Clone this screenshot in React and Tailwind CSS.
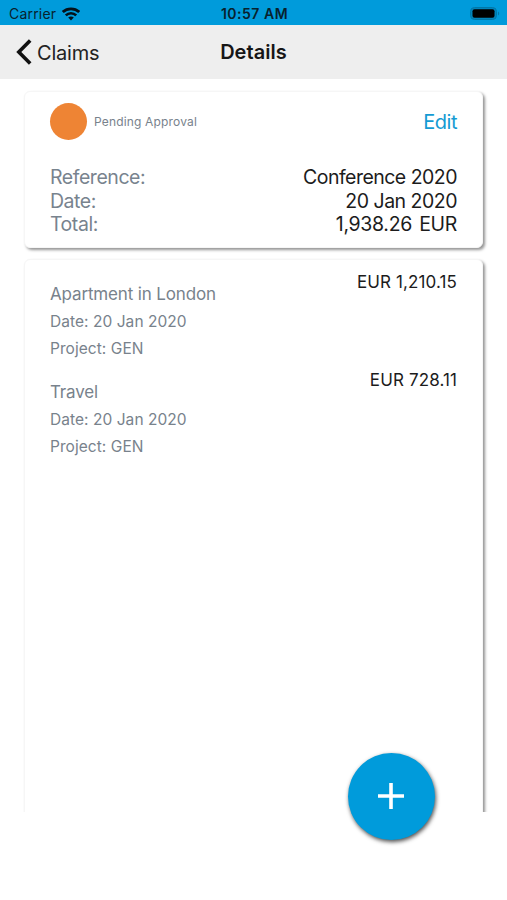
const claim = {
  status: 'Pending Approval',
  rows: [
    { label: 'Reference:', value: 'Conference 2020', tracking: 'tracking-[-0.52px]' },
    { label: 'Date:', value: '20 Jan 2020', tracking: 'tracking-[-0.5px]' },
    { label: 'Total:', value: '1,938.26 EUR', tracking: 'tracking-[-0.32px] [word-spacing:2px]' },
  ],
  items: [
    { name: 'Apartment in London', date: '20 Jan 2020', project: 'GEN', amount: 'EUR 1,210.15' },
    { name: 'Travel', date: '20 Jan 2020', project: 'GEN', amount: 'EUR 728.11' },
  ],
};

function StatusBar() {
  return (
    <div className="grid h-[25px] grid-cols-3 items-center bg-[#009bdb] pt-[2px] pr-[7px] pl-[9px] text-[#08222e]">
      <div className="flex items-center gap-[6px]">
        <span className="text-[14px] leading-none tracking-[0.2px]">Carrier</span>
        <svg width="18" height="14" viewBox="0 0 18 14" fill="none" stroke="#04121a">
          <path d="M0.8 5C5.2 0.8 12.8 0.8 17.2 5" strokeWidth="2.8" />
          <path d="M3.8 8.4C6.6 5.5 11.4 5.5 14.2 8.4" strokeWidth="2.6" />
          <path d="M9 13.4L6.2 10.6C7.8 9.2 10.2 9.2 11.8 10.6Z" fill="#04121a" stroke="none" />
        </svg>
      </div>
      <span className="text-center text-[14px] leading-none font-semibold tracking-[0.5px]">10:57 AM</span>
      <svg className="justify-self-end" width="30" height="14" viewBox="0 0 30 14">
        <rect x="0.5" y="0.5" width="26" height="12" rx="4" fill="#0084bb" stroke="#0077a8" />
        <rect x="2.5" y="2.3" width="22" height="8.4" rx="2" fill="#000" />
        <path d="M28 4.6C29.6 5.2 29.6 8 28 8.6Z" fill="#0077a8" />
      </svg>
    </div>
  );
}

function NavBar() {
  return (
    <div className="grid h-[54px] grid-cols-3 items-center bg-[#eeeeee] px-4 text-[20px]">
      <button className="flex items-center gap-[5px] text-left text-[#222222]">
        <svg width="16" height="26" viewBox="0 0 16 26" fill="none" stroke="#111111" strokeWidth="3.6">
          <path d="M14.2 1.5L2.8 13L14.2 24.5" />
        </svg>
        <span className="pt-px tracking-[-0.2px]">Claims</span>
      </button>
      <h1 className="text-center font-semibold tracking-[0.05px] text-[#161616]">Details</h1>
    </div>
  );
}

function Summary() {
  return (
    <section className="mx-6 mt-3 h-[157px] rounded-[6px] border border-[#f6f6f6] bg-white px-[25px] pt-[11px] shadow-[2px_2px_3px_rgba(0,0,0,0.42)]">
      <div className="flex h-[37px] items-center">
        <div className="h-[37px] w-[37px] rounded-full bg-[#ee8434]" />
        <span className="ml-[7px] pt-px text-[12px] tracking-[0.17px] text-[#78828c]">{claim.status}</span>
        <button className="ml-auto text-[20px] tracking-[-0.45px] text-[#149bd3]">Edit</button>
      </div>
      <div className="mt-[26px] text-[19.5px] leading-[23.6px]">
        {claim.rows.map((row) => (
          <div key={row.label} className="flex justify-between">
            <span className="tracking-[-0.45px] text-[#78838e]">{row.label}</span>
            <span className={`${row.tracking} text-[#1c1c1c]`}>{row.value}</span>
          </div>
        ))}
      </div>
    </section>
  );
}

function Expenses() {
  return (
    <div className="h-[564px] overflow-hidden px-6 pt-[11px]">
      <section className="h-[600px] rounded-[6px] border border-[#f6f6f6] bg-white px-[25px] pt-[9px] shadow-[2px_2px_3px_rgba(0,0,0,0.42)]">
        {claim.items.map((item) => (
          <div key={item.name} className="flex h-[98px] justify-between">
            <div className="pt-[11px] text-[15.5px] leading-[26.5px] tracking-[0.05px] text-[#78828c]">
              <p className="text-[17px] leading-[29px] tracking-[-0.15px]">{item.name}</p>
              <p>Date: {item.date}</p>
              <p>Project: {item.project}</p>
            </div>
            <span className="text-[17px] leading-[26px] tracking-[0.12px] text-[#1c1c1c]">{item.amount}</span>
          </div>
        ))}
      </section>
    </div>
  );
}

export default function App() {
  return (
    <div className="relative h-[900px] w-[507px] overflow-hidden bg-white font-['Inter',sans-serif]">
      <StatusBar />
      <NavBar />
      <Summary />
      <Expenses />
      <button className="absolute top-[753px] left-[348px] flex h-[87px] w-[87px] items-center justify-center rounded-full bg-[#009bdb] pr-[2px] pb-px shadow-[1px_2px_4px_rgba(0,0,0,0.7)]">
        <svg width="26" height="26" viewBox="0 0 26 26" stroke="#fff" strokeWidth="3.6">
          <path d="M13 0V26M0 13H26" />
        </svg>
      </button>
    </div>
  );
}
